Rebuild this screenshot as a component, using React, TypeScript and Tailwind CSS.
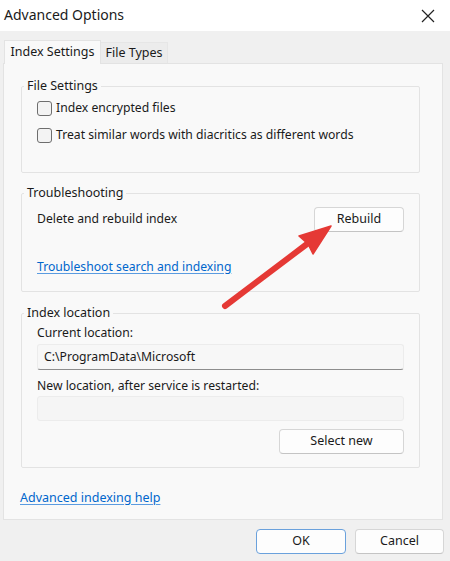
import React from 'react'

function Checkbox({ label }: { label: string }) {
  return (
    <label className="flex items-center h-[20px] gap-[4px]">
      <span className="w-[15px] h-[15px] rounded-[3px] border border-[#6e6e6e] bg-[#f3f3f3] shrink-0" />
      <span>{label}</span>
    </label>
  )
}

function Button({ children, primary, className }: { children: React.ReactNode; primary?: boolean; className?: string }) {
  return (
    <button
      className={`h-[25px] rounded-[4px] bg-[#fdfdfd] border text-[12.5px] text-[#1a1a1a] ${
        primary ? 'border-[#6aa1dc]' : 'border-[#d6d6d6] border-b-[#c4c4c4]'
      } ${className ?? ''}`}
    >
      {children}
    </button>
  )
}

function Group({ title, children, className }: { title: string; children: React.ReactNode; className?: string }) {
  return (
    <fieldset className={`border border-[#e3e3e3] rounded-[2px] pl-[15px] pr-[15px] ${className ?? ''}`}>
      <legend className="ml-[-13px] px-[3px] leading-[18px] text-[12.5px]">{title}</legend>
      {children}
    </fieldset>
  )
}

export default function App() {
  return (
    <div
      className="relative w-[450px] h-[561px] bg-[#f0f0f0] text-[12.2px] text-[#1a1a1a] overflow-hidden"
      style={{ fontFamily: '"Noto Sans", "Open Sans", Arial, sans-serif' }}
    >
      {/* title bar */}
      <div className="h-[31px] bg-white flex items-center justify-between pl-[4px] pr-[10px]">
        <span className="text-[14px] leading-none pb-[2px]">Advanced Options</span>
        <svg width="14" height="14" viewBox="0 0 14 14" className="mr-[5px]">
          <path d="M1 1 L13 13 M13 1 L1 13" stroke="#222" strokeWidth="1.2" fill="none" />
        </svg>
      </div>

      {/* tabs */}
      <div className="flex items-end pl-[4px] mt-[8px] h-[24px] text-[12.5px]">
        <div className="h-[24px] w-[97px] bg-[#f9f9f9] border border-b-0 border-[#e3e3e3] flex items-center justify-center relative z-10 -mb-px">
          Index Settings
        </div>
        <div className="h-[21px] w-[67px] bg-[#ececec] border border-l-0 border-b-0 border-[#e6e6e6] flex items-center justify-center">
          File Types
        </div>
      </div>

      {/* panel */}
      <div className="ml-[3px] w-[440px] h-[457px] bg-[#f9f9f9] border border-[#e3e3e3] pt-[13px] pl-[17px] pr-[22px]">
        <Group title="File Settings" className="h-[96px]">
          <div className="flex flex-col gap-[7px] pt-[3px]">
            <Checkbox label="Index encrypted files" />
            <Checkbox label="Treat similar words with diacritics as different words" />
          </div>
        </Group>

        <Group title="Troubleshooting" className="h-[108px] mt-[11px]">
          <div className="flex items-center justify-between h-[25px] mt-[5px]">
            <span>Delete and rebuild index</span>
            <Button className="w-[90px]">Rebuild</Button>
          </div>
          <a className="block mt-[26px] text-[#0066cc] underline underline-offset-2 decoration-[#5a9be0]" href="#">
            Troubleshoot search and indexing
          </a>
        </Group>

        <Group title="Index location" className="h-[164px] mt-[12px]">
          <div className="leading-[18px] mt-[2px]">Current location:</div>
          <div className="h-[26px] mt-[2px] bg-[#f7f7f7] border border-[#ececec] border-b-[#8d8d8d] rounded-[3px] flex items-center pl-[6px]">
            C:\ProgramData\Microsoft
          </div>
          <div className="leading-[18px] mt-[7px]">New location, after service is restarted:</div>
          <div className="h-[25px] mt-[1px] bg-[#f5f5f5] border border-[#ececec] rounded-[3px]" />
          <div className="flex justify-end mt-[8px]">
            <Button className="w-[125px]">Select new</Button>
          </div>
        </Group>

        <a className="block mt-[21px] ml-[-1px] text-[12.5px] text-[#0066cc] underline underline-offset-2 decoration-[#5a9be0]" href="#">
          Advanced indexing help
        </a>
      </div>

      {/* footer buttons */}
      <div className="flex justify-end gap-[9px] pr-[6px] mt-[9px]">
        <Button primary className="w-[90px]">OK</Button>
        <Button className="w-[89px]">Cancel</Button>
      </div>

      {/* red annotation arrow */}
      <svg className="absolute left-0 top-0 pointer-events-none" width="450" height="561" viewBox="0 0 450 561">
        <path d="M225 306 L307 244" stroke="#e53935" strokeWidth="6" strokeLinecap="round" fill="none" />
        <path d="M331 226 L299 236 L308 244 L313 254 Z" fill="#e53935" stroke="#e53935" strokeWidth="1.5" strokeLinejoin="round" />
      </svg>
    </div>
  )
}
